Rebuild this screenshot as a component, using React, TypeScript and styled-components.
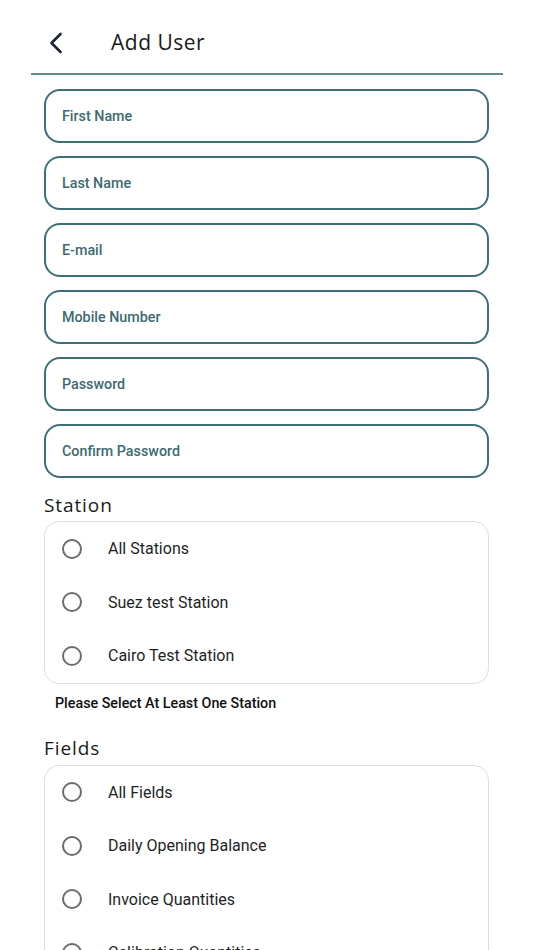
import React from "react";
import styled, { createGlobalStyle } from "styled-components";

const Global = createGlobalStyle`
  html, body { margin: 0; padding: 0; background: #ffffff; }
  body { font-family: Roboto, "Noto Sans", sans-serif; }
  * { box-sizing: border-box; }
`;

const Page = styled.div`
  width: 534px;
  height: 950px;
  overflow: hidden;
  background: #fff;
`;

const Header = styled.header`
  height: 73px;
  display: flex;
  align-items: flex-start;
  padding: 12px 0 0 47px;
`;

const BackButton = styled.button`
  width: 18px;
  height: 22px;
  border: 0;
  background: none;
  padding: 0;
  margin-top: 20px;
  display: flex;
  align-items: center;
  justify-content: center;
  color: #1c2433;
`;

const Title = styled.h1`
  margin: 16px 0 0 46px;
  font-family: "Open Sans", "Noto Sans", sans-serif;
  font-weight: 400;
  font-size: 21px;
  line-height: 28px;
  color: #1a1a1a;
  letter-spacing: 0.5px;
`;

const Divider = styled.hr`
  margin: 0 31px;
  border: 0;
  height: 2px;
  background: #5e8b91;
`;

const Form = styled.div`
  padding: 14px 45px 0 44px;
  display: flex;
  flex-direction: column;
`;

const Inputs = styled.div`
  display: flex;
  flex-direction: column;
  gap: 13px;
`;

const InputBox = styled.div`
  height: 54px;
  border: 2.5px solid #3e6f76;
  border-radius: 16px;
  display: flex;
  align-items: center;
  padding-left: 16px;
  font-family: Roboto, sans-serif;
  font-weight: 500;
  font-size: 14.3px;
  color: #3d6a71;
`;

const SectionTitle = styled.div<{ $top: number }>`
  margin-top: ${(p) => p.$top}px;
  font-family: "Open Sans", "Noto Sans", sans-serif;
  font-weight: 400;
  font-size: 19px;
  line-height: 24px;
  color: #1a1a1a;
  letter-spacing: 0.9px;
`;

const Card = styled.div<{ $gap: number }>`
  margin-top: ${(p) => p.$gap}px;
  border: 1px solid #dedede;
  border-radius: 15px;
  display: flex;
  flex-direction: column;
`;

const Row = styled.label`
  height: 53.5px;
  display: flex;
  align-items: center;
  padding-left: 17px;
  gap: 26px;
  font-family: Roboto, sans-serif;
  font-size: 16px;
  color: #1f1f1f;
`;

const Radio = styled.span`
  width: 20px;
  height: 20px;
  border-radius: 50%;
  border: 2px solid #6c6c6c;
  flex: none;
`;

const Helper = styled.div`
  margin-top: 11px;
  padding-left: 11px;
  font-family: Roboto, sans-serif;
  font-weight: 500;
  font-size: 14.3px;
  line-height: 16px;
  color: #111;
`;

const inputs = ["First Name", "Last Name", "E-mail", "Mobile Number", "Password", "Confirm Password"];
const stations = ["All Stations", "Suez test Station", "Cairo Test Station"];
const fields = ["All Fields", "Daily Opening Balance", "Invoice Quantities", "Calibration Quantities", "Closing Balance"];

export default function App() {
  return (
    <Page>
      <Global />
      <Header>
        <BackButton aria-label="Back">
          <svg width="16" height="22" viewBox="0 0 16 22" fill="none">
            <path d="M12.5 2 L3.5 11 L12.5 20" stroke="currentColor" strokeWidth="2.6" strokeLinecap="round" strokeLinejoin="round" />
          </svg>
        </BackButton>
        <Title>Add User</Title>
      </Header>
      <Divider />
      <Form>
        <Inputs>
          {inputs.map((t) => (
            <InputBox key={t}>{t}</InputBox>
          ))}
        </Inputs>
        <SectionTitle $top={15}>Station</SectionTitle>
        <Card $gap={4}>
          {stations.map((s) => (
            <Row key={s}>
              <Radio />
              {s}
            </Row>
          ))}
        </Card>
        <Helper>Please Select At Least One Station</Helper>
        <SectionTitle $top={25}>Fields</SectionTitle>
        <Card $gap={5}>
          {fields.map((s) => (
            <Row key={s}>
              <Radio />
              {s}
            </Row>
          ))}
        </Card>
      </Form>
    </Page>
  );
}
